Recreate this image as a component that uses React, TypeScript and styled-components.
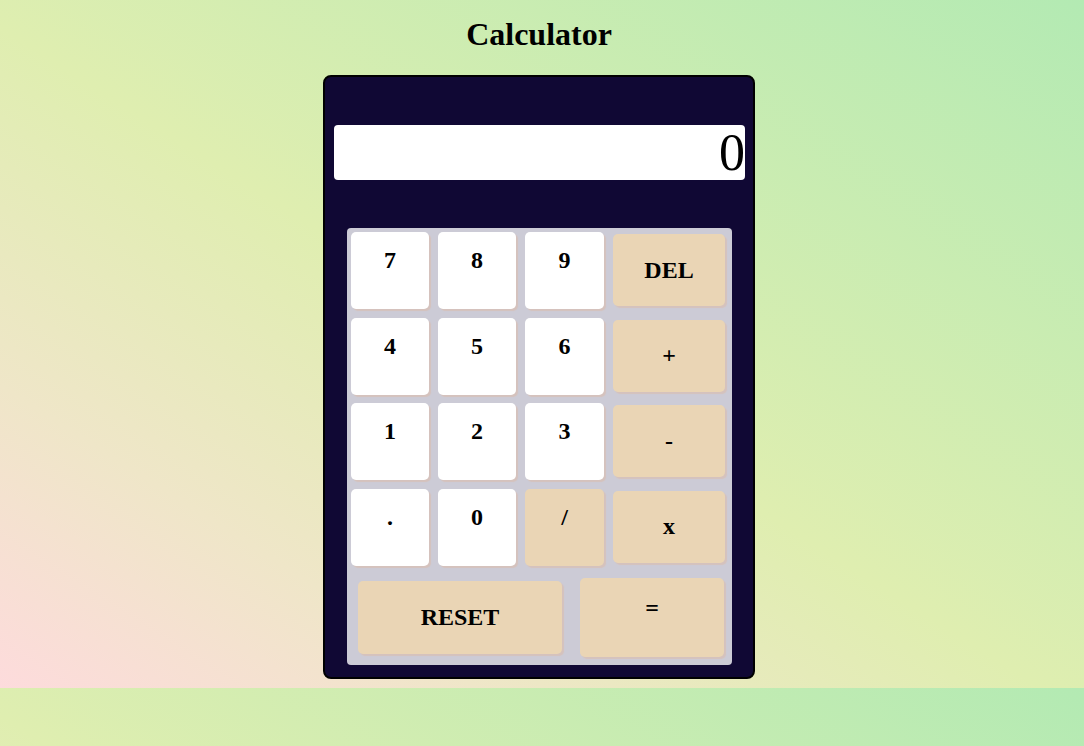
import React, { useState } from "react";
import styled, { createGlobalStyle } from "styled-components";

const GlobalStyle = createGlobalStyle`
  body {
    margin: 0;
    padding: 0 6px 9px 0;
    font-family: "Liberation Serif", "Times New Roman", serif;
    background: linear-gradient(to top right, #fddbdc, #efe6c8 22%, #dfeeb0 48%, #b3eab3);
  }
`;

const Page = styled.div({
  display: "flex",
  flexDirection: "column",
  alignItems: "center",
});

const Title = styled.h1({
  margin: "16px 0 22px",
  fontSize: "32px",
  fontWeight: "bold",
  color: "#000",
});

const Calculator = styled.div({
  width: "428px",
  border: "2px solid #000",
  borderRadius: "8px",
  background: "#100834",
  padding: "48px 0 12px",
  display: "flex",
  flexDirection: "column",
});

const Display = styled.div({
  margin: "0 8px 48px 9px",
  height: "55px",
  lineHeight: "55px",
  background: "#fff",
  borderRadius: "4px",
  textAlign: "right",
  fontSize: "52px",
  color: "#000",
  overflow: "hidden",
});

const Panel = styled.div({
  margin: "0 21px 0 22px",
  padding: "4px 6px 8px 4px",
  background: "#cccbd6",
  borderRadius: "4px",
  display: "flex",
  flexDirection: "column",
});

const KeyGrid = styled.div({
  display: "grid",
  gridTemplateColumns: "78px 78px 79px 112px",
  gridTemplateRows: "repeat(4, 77px)",
  columnGap: "9px",
  rowGap: "8.5px",
});

const Key = styled.button<{ $op?: boolean; $center?: boolean }>`
  border: none;
  border-radius: 5px;
  background: ${(p) => (p.$op ? "#ead5b5" : "#fff")};
  box-shadow: 2px 2px 1px #d5c2bd;
  font-family: "Liberation Serif", "Times New Roman", serif;
  font-size: 24px;
  font-weight: bold;
  color: #000;
  cursor: pointer;
  display: flex;
  justify-content: center;
  align-items: ${(p) => (p.$center ? "center" : "flex-start")};
  padding: ${(p) => (p.$center ? "0" : "15px 0 0")};
`;

const SideKey = styled(Key)({
  marginTop: "2px",
  height: "72px",
});

const BottomRow = styled.div({
  display: "flex",
  alignItems: "center",
  gap: "18px",
  marginTop: "12px",
  padding: "0 2px 0 7px",
});

const ResetKey = styled(Key)({
  width: "204px",
  height: "73px",
});

const EqualsKey = styled(Key)({
  width: "144px",
  height: "79px",
  paddingTop: "17px",
});

const rows = [
  ["7", "8", "9", "DEL"],
  ["4", "5", "6", "+"],
  ["1", "2", "3", "-"],
  [".", "0", "/", "x"],
];

const App = () => {
  const [value, setValue] = useState("0");

  const press = (k: string) => {
    if (k === "DEL") {
      setValue((v) => (v.length > 1 ? v.slice(0, -1) : "0"));
      return;
    }
    setValue((v) => (v === "0" && k !== "." ? k : v + k));
  };

  const calculate = () => {
    try {
      // eslint-disable-next-line no-new-func
      const result = Function(`return (${value.replace(/x/g, "*")})`)();
      setValue(String(result));
    } catch {
      setValue("0");
    }
  };

  return (
    <Page>
      <GlobalStyle />
      <Title>Calculator</Title>
      <Calculator>
        <Display>{value}</Display>
        <Panel>
          <KeyGrid>
            {rows.map((row) =>
              row.map((k, i) =>
                i === 3 ? (
                  <SideKey key={k} $op $center onClick={() => press(k)}>
                    {k}
                  </SideKey>
                ) : (
                  <Key key={k} $op={k === "/"} onClick={() => press(k)}>
                    {k}
                  </Key>
                )
              )
            )}
          </KeyGrid>
          <BottomRow>
            <ResetKey $op $center onClick={() => setValue("0")}>
              RESET
            </ResetKey>
            <EqualsKey $op onClick={calculate}>
              =
            </EqualsKey>
          </BottomRow>
        </Panel>
      </Calculator>
    </Page>
  );
};

export default App;
